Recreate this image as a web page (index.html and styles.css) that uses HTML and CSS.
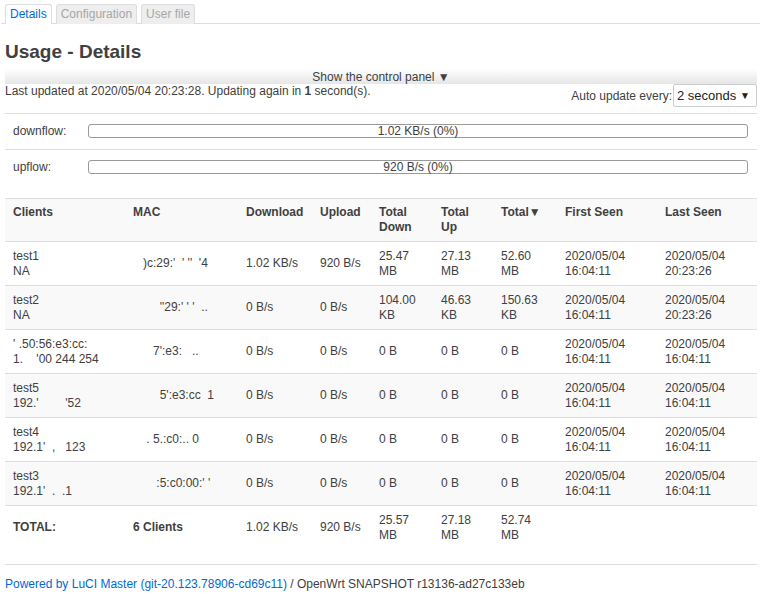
FILE: index.html
```html
<!DOCTYPE html>
<html>
<head>
<meta charset="utf-8">
<title>Usage - Details</title>
<link rel="stylesheet" href="styles.css">
</head>
<body>
<ul class="tabs">
  <li class="tab active">Details</li>
  <li class="tab">Configuration</li>
  <li class="tab">User file</li>
</ul>
<div class="main">
  <h2 class="title">Usage - Details</h2>
  <div class="panel-toggle">Show the control panel ▼</div>
  <div class="status">
    <div class="status-text">Last updated at 2020/05/04 20:23:28. Updating again in <b>1</b> second(s).</div>
    <div class="auto">
      <span class="auto-label">Auto update every:</span>
      <div class="select"><span>2 seconds</span><span class="arrow">▼</span></div>
    </div>
  </div>
  <div class="flows">
    <div class="flow-row">
      <div class="flow-label">downflow:</div>
      <div class="bar">1.02 KB/s (0%)</div>
    </div>
    <div class="flow-row">
      <div class="flow-label">upflow:</div>
      <div class="bar">920 B/s (0%)</div>
    </div>
  </div>
  <table class="clients">
    <colgroup>
      <col class="c-client"><col class="c-mac"><col class="c-down"><col class="c-up"><col class="c-tdown"><col class="c-tup"><col class="c-total"><col class="c-first"><col class="c-last">
    </colgroup>
    <thead>
      <tr class="head">
        <th>Clients</th><th>MAC</th><th>Download</th><th>Upload</th><th>Total<br>Down</th><th>Total<br>Up</th><th>Total▼</th><th>First Seen</th><th>Last Seen</th>
      </tr>
    </thead>
    <tbody>
      <tr>
        <td>test1<br>NA</td><td><span class="mac">   )c:29:'  ' ''  '4</span></td><td>1.02 KB/s</td><td>920 B/s</td><td>25.47<br>MB</td><td>27.13<br>MB</td><td>52.60<br>MB</td><td>2020/05/04<br>16:04:11</td><td>2020/05/04<br>20:23:26</td>
      </tr>
      <tr class="alt">
        <td>test2<br>NA</td><td><span class="mac">        ''29:' ' '  ..</span></td><td>0 B/s</td><td>0 B/s</td><td>104.00<br>KB</td><td>46.63<br>KB</td><td>150.63<br>KB</td><td>2020/05/04<br>16:04:11</td><td>2020/05/04<br>20:23:26</td>
      </tr>
      <tr>
        <td><span class="mac">' .50:56:e3:cc:<br>1.    '00 244 254</span></td><td><span class="mac">      7':e3:   ..</span></td><td>0 B/s</td><td>0 B/s</td><td>0 B</td><td>0 B</td><td>0 B</td><td>2020/05/04<br>16:04:11</td><td>2020/05/04<br>16:04:11</td>
      </tr>
      <tr class="alt">
        <td>test5<br><span class="mac">192.'        '52</span></td><td><span class="mac">        5':e3:cc  1</span></td><td>0 B/s</td><td>0 B/s</td><td>0 B</td><td>0 B</td><td>0 B</td><td>2020/05/04<br>16:04:11</td><td>2020/05/04<br>16:04:11</td>
      </tr>
      <tr>
        <td>test4<br><span class="mac">192.1'  ,   123</span></td><td><span class="mac">    . 5.:c0:.. 0</span></td><td>0 B/s</td><td>0 B/s</td><td>0 B</td><td>0 B</td><td>0 B</td><td>2020/05/04<br>16:04:11</td><td>2020/05/04<br>16:04:11</td>
      </tr>
      <tr class="alt">
        <td>test3<br><span class="mac">192.1'  .  .1</span></td><td><span class="mac">       :5:c0:00:' '</span></td><td>0 B/s</td><td>0 B/s</td><td>0 B</td><td>0 B</td><td>0 B</td><td>2020/05/04<br>16:04:11</td><td>2020/05/04<br>16:04:11</td>
      </tr>
      <tr class="total">
        <td><b>TOTAL:</b></td><td><b>6 Clients</b></td><td>1.02 KB/s</td><td>920 B/s</td><td>25.57<br>MB</td><td>27.18<br>MB</td><td>52.74<br>MB</td><td></td><td></td>
      </tr>
    </tbody>
  </table>
  <footer class="footer">
    <a class="footer-link" href="#">Powered by LuCI Master (git-20.123.78906-cd69c11)</a> / OpenWrt SNAPSHOT r13136-ad27c133eb
  </footer>
</div>
</body>
</html>
```
FILE: styles.css
```css
html, body {
  margin: 0;
  padding: 0;
  background: #fff;
}
body {
  font-family: "Liberation Sans", Arial, sans-serif;
  font-size: 12px;
  line-height: 14.5px;
  color: #404040;
}
.tabs {
  list-style: none;
  margin: 0 4px 0 1px;
  padding: 4px 0 0 4px;
  display: flex;
  gap: 4px;
  border-bottom: 1px solid #ddd;
}
.tab {
  height: 18px;
  line-height: 18px;
  padding: 0 4px;
  border: 1px solid #ddd;
  border-bottom: none;
  border-radius: 3px 3px 0 0;
  background: #eee;
  color: #a6a6a6;
  margin-bottom: -1px;
  padding-bottom: 1px;
}
.tab.active {
  background: #fff;
  color: #0069d6;
}
.main {
  padding: 0 7px 0 5px;
}
.title {
  font-size: 19px;
  line-height: 22px;
  font-weight: bold;
  margin: 17px 0 6px;
  color: #404040;
}
.panel-toggle {
  height: 15px;
  line-height: 16px;
  text-align: center;
  background: linear-gradient(to bottom, #ffffff 0%, #f2f2f2 50%, #e6e6e6 100%);
}
.status {
  display: flex;
  justify-content: space-between;
  align-items: flex-start;
  padding-bottom: 6px;
  border-bottom: 1px solid #ddd;
}
.status-text {
  line-height: 14px;
}
.auto {
  display: flex;
  align-items: center;
}
.auto-label {
  padding-right: 1px;
  padding-top: 2px;
}
.select {
  height: 21px;
  border: 1px solid #ccc;
  border-radius: 2px;
  display: flex;
  align-items: center;
  justify-content: space-between;
  padding: 0 0 0 3px;
  box-sizing: content-box;
  width: 79px;
  line-height: 21px;
  color: #222;
  font-size: 13px;
}
.select .arrow {
  font-size: 10px;
  padding-right: 6px;
  color: #222;
}
.flows {
  margin-bottom: 14px;
}
.flow-row {
  display: flex;
  align-items: center;
  padding: 10px 9px 10px 0;
}
.flow-row + .flow-row {
  border-top: 1px solid #ddd;
}
.flow-label {
  width: 75px;
  padding-left: 8px;
}
.bar {
  flex: 1;
  height: 12px;
  line-height: 12px;
  border: 1px solid #999;
  border-radius: 3px;
  text-align: center;
  font-size: 12px;
}
.clients {
  width: 752px;
  table-layout: fixed;
  border-collapse: collapse;
}
.c-client { width: 120px; }
.c-mac { width: 113px; }
.c-down { width: 74px; }
.c-up { width: 59px; }
.c-tdown { width: 62px; }
.c-tup { width: 60px; }
.c-total { width: 64px; }
.c-first { width: 100px; }
.c-last { width: 100px; }
.clients th,
.clients td {
  text-align: left;
  padding: 7px 8px;
  border-top: 1px solid #ddd;
  vertical-align: middle;
  white-space: nowrap;
  overflow: hidden;
}
.clients th {
  font-weight: bold;
  vertical-align: top;
  padding: 6px 8px 7px;
  background: #f9f9f9;
}
.clients tr.alt td {
  background: #f9f9f9;
}
.clients td {
  height: 29px;
}
.mac {
  white-space: pre;
}
.footer {
  margin-top: 15px;
  border-top: 1px solid #ddd;
  padding-top: 12px;
}
.footer-link {
  color: #0069d6;
  text-decoration: none;
}
```
